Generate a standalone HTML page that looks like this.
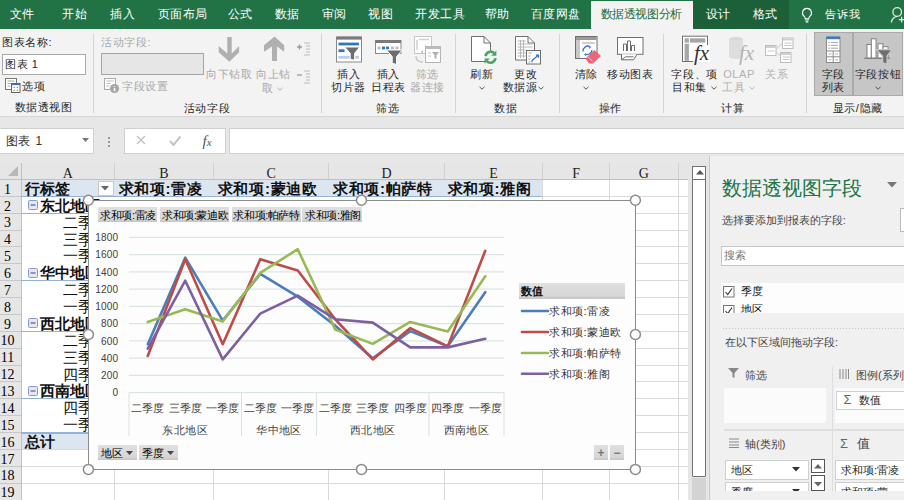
<!DOCTYPE html>
<html><head><meta charset="utf-8">
<style>
html,body{margin:0;padding:0;width:904px;height:500px;overflow:hidden;background:#e7e7e7;font-family:"Liberation Sans",sans-serif;}
.a{position:absolute;box-sizing:border-box;}
.t{position:absolute;white-space:nowrap;}
svg{position:absolute;overflow:visible;}
</style></head><body>

<div class="a" style="left:0px;top:0px;width:904px;height:29px;background:#217346;"></div>
<div class="a" style="left:591px;top:1px;width:102px;height:28px;background:#f3f3f3;"></div>
<div class="a" style="left:693px;top:0px;width:96px;height:29px;background:#1c603a;"></div>
<div class="t" style="left:824.5px;top:6.40px;font-size:11px;line-height:17px;color:#ffffff;font-weight:normal;letter-spacing:1.0px;">告诉我</div>
<div class="t" style="left:9.5px;top:5.20px;font-size:12px;line-height:19px;color:#ffffff;font-weight:normal;letter-spacing:0.6px;">文件</div>
<div class="t" style="left:62.1px;top:5.20px;font-size:12px;line-height:19px;color:#ffffff;font-weight:normal;letter-spacing:0.6px;">开始</div>
<div class="t" style="left:110.1px;top:5.20px;font-size:12px;line-height:19px;color:#ffffff;font-weight:normal;letter-spacing:0.6px;">插入</div>
<div class="t" style="left:157.5px;top:5.20px;font-size:12px;line-height:19px;color:#ffffff;font-weight:normal;letter-spacing:0.6px;">页面布局</div>
<div class="t" style="left:227.9px;top:5.20px;font-size:12px;line-height:19px;color:#ffffff;font-weight:normal;letter-spacing:0.6px;">公式</div>
<div class="t" style="left:274.9px;top:5.20px;font-size:12px;line-height:19px;color:#ffffff;font-weight:normal;letter-spacing:0.6px;">数据</div>
<div class="t" style="left:321.9px;top:5.20px;font-size:12px;line-height:19px;color:#ffffff;font-weight:normal;letter-spacing:0.6px;">审阅</div>
<div class="t" style="left:368.2px;top:5.20px;font-size:12px;line-height:19px;color:#ffffff;font-weight:normal;letter-spacing:0.6px;">视图</div>
<div class="t" style="left:415.2px;top:5.20px;font-size:12px;line-height:19px;color:#ffffff;font-weight:normal;letter-spacing:0.6px;">开发工具</div>
<div class="t" style="left:484.5px;top:5.20px;font-size:12px;line-height:19px;color:#ffffff;font-weight:normal;letter-spacing:0.6px;">帮助</div>
<div class="t" style="left:530.5px;top:5.20px;font-size:12px;line-height:19px;color:#ffffff;font-weight:normal;letter-spacing:0.6px;">百度网盘</div>
<div class="t" style="left:705.5px;top:5.20px;font-size:12px;line-height:19px;color:#ffffff;font-weight:normal;letter-spacing:0.6px;">设计</div>
<div class="t" style="left:752.5px;top:5.20px;font-size:12px;line-height:19px;color:#ffffff;font-weight:normal;letter-spacing:0.6px;">格式</div>
<div class="t" style="left:600.5px;top:5.40px;font-size:12px;line-height:19px;color:#1b6b3e;font-weight:normal;letter-spacing:-0.4px;">数据透视图分析</div>
<svg style="left:800px;top:6px" width="14" height="20" viewBox="0 0 14 20"><g transform="translate(7 10) scale(0.9) translate(-7 -10)"><path d="M7 1.5a5 5 0 0 0-3 9c.8.7 1 1.5 1 2.5h4c0-1 .2-1.8 1-2.5a5 5 0 0 0-3-9z" fill="none" stroke="#fff" stroke-width="1.2"/><path d="M5 14.5h4M5.5 16.5h3" stroke="#fff" stroke-width="1.2"/></g></svg>
<svg style="left:0;top:0" width="904" height="30" viewBox="0 0 904 30"><circle cx="897.2" cy="12" r="4.3" fill="none" stroke="#e8e8e8" stroke-width="1.3"/><path d="M891.3 22.5c0.5-3 2.8-5.8 6-6.2" fill="none" stroke="#e8e8e8" stroke-width="1.3"/><path d="M898.8 19.6h6M901.6 16.8v5.8" stroke="#e8e8e8" stroke-width="1.2"/></svg>
<div class="a" style="left:0px;top:29px;width:904px;height:88px;background:#f3f3f3;border-bottom:1px solid #d6d6d6;"></div>
<div class="a" style="left:93px;top:34px;width:1px;height:79px;background:#d4d4d4;"></div>
<div class="a" style="left:321px;top:34px;width:1px;height:79px;background:#d4d4d4;"></div>
<div class="a" style="left:455px;top:34px;width:1px;height:79px;background:#d4d4d4;"></div>
<div class="a" style="left:558.8px;top:34px;width:1px;height:79px;background:#d4d4d4;"></div>
<div class="a" style="left:662.8px;top:34px;width:1px;height:79px;background:#d4d4d4;"></div>
<div class="a" style="left:806px;top:34px;width:1px;height:79px;background:#d4d4d4;"></div>
<div class="t" style="left:2px;top:33.80px;font-size:11.01px;line-height:17px;color:#262626;font-weight:normal;letter-spacing:0.6px;">图表名称:</div>
<div class="a" style="left:2px;top:53.6px;width:84px;height:21px;background:#fff;border:1px solid #a8a8a8;"></div>
<div class="t" style="left:5px;top:56.00px;font-size:11.01px;line-height:17px;color:#262626;font-weight:normal;letter-spacing:0.6px;">图表 1</div>
<svg style="left:0;top:0" width="100" height="100" viewBox="0 0 100 100"><rect x="5.5" y="78.5" width="11" height="11" fill="#fff" stroke="#777"/><path d="M7.5 81h7M7.5 83.5h7M7.5 86h3" stroke="#aaa" stroke-width="1"/><rect x="11.5" y="83.5" width="8.5" height="9" fill="#fff" stroke="#666"/><rect x="11.5" y="83.5" width="8.5" height="1.6" fill="#3a6fc4"/><path d="M13.5 87.5h1.2M16.8 87.5h1.2M13.5 90.3h1.2M16.8 90.3h1.2" stroke="#777" stroke-width="1"/></svg>
<div class="t" style="left:22px;top:77.50px;font-size:11.01px;line-height:17px;color:#262626;font-weight:normal;letter-spacing:0.6px;">选项</div>
<div class="t" style="left:-6.5px;width:100px;text-align:center;top:99.00px;font-size:11.01px;line-height:17px;color:#262626;font-weight:normal;letter-spacing:0.6px;">数据透视图</div>
<div class="t" style="left:101px;top:34.30px;font-size:11.01px;line-height:17px;color:#a8a8a8;font-weight:normal;letter-spacing:0.6px;">活动字段:</div>
<div class="a" style="left:101px;top:53px;width:103px;height:21.6px;background:#e6e6e6;border:1px solid #a6a6a6;"></div>
<svg style="left:0;top:0" width="130" height="100" viewBox="0 0 130 100"><rect x="104.5" y="78.5" width="11" height="11" fill="#fff" stroke="#aaa"/><path d="M106.5 81h7M106.5 83.5h4M106.5 86h3" stroke="#bbb" stroke-width="1"/><circle cx="114.5" cy="88.5" r="4.6" fill="#a6a6a6"/><path d="M114.5 86.2v0.9M114.5 88v3.3" stroke="#fff" stroke-width="1.5"/></svg>
<div class="t" style="left:122px;top:78.00px;font-size:11.01px;line-height:17px;color:#a8a8a8;font-weight:normal;letter-spacing:0.6px;">字段设置</div>
<div class="t" style="left:157.0px;width:100px;text-align:center;top:99.80px;font-size:11.01px;line-height:17px;color:#262626;font-weight:normal;letter-spacing:0.6px;">活动字段</div>
<svg style="left:0;top:0" width="904" height="120" viewBox="0 0 904 120"><path d="M227.3 37h4.4v16.5l7.4-7.5v6.2l-9.7 9.5-10.7-9.5v-6.2l8.6 7.5z" fill="#b0b0b0"/><path d="M272 61h5v-14.5l7.2 5.3v-6.5l-9.7-8.8-10.5 8.8v6.5l8-5.3z" fill="#b0b0b0"/></svg>
<div class="t" style="left:199.4px;width:60px;text-align:center;top:66.10px;font-size:11.01px;line-height:17px;color:#a8a8a8;font-weight:normal;letter-spacing:0.6px;">向下钻取</div>
<div class="t" style="left:243.7px;width:60px;text-align:center;top:66.10px;font-size:11.01px;line-height:17px;color:#a8a8a8;font-weight:normal;letter-spacing:0.6px;">向上钻</div>
<div class="t" style="left:238.0px;width:60px;text-align:center;top:80.00px;font-size:11.01px;line-height:17px;color:#a8a8a8;font-weight:normal;letter-spacing:0.6px;">取</div>
<svg style="left:277px;top:86.5px" width="6" height="4" viewBox="0 0 6 4"><path d="M0.5 0.8L3 3.2L5.5 0.8" fill="none" stroke="#b0b0b0" stroke-width="1"/></svg>
<svg style="left:296px;top:42px" width="16" height="14" viewBox="0 0 16 14"><path d="M1 5h5M3.5 2.5v5" stroke="#999" stroke-width="1.3"/><path d="M8 1h6M10 4h4M10 7h4M10 10h4M8 13h6" stroke="#bbb" stroke-width="1.2"/></svg>
<svg style="left:296px;top:70px" width="16" height="14" viewBox="0 0 16 14"><path d="M1 5h5" stroke="#999" stroke-width="1.3"/><path d="M8 1h6M10 4h4M10 7h4M10 10h4M8 13h6" stroke="#bbb" stroke-width="1.2"/></svg>
<svg style="left:0;top:0" width="904" height="120" viewBox="0 0 904 120"><rect x="336.5" y="37" width="25" height="25" fill="#fff" stroke="#8a8a8a"/><rect x="336.5" y="36.6" width="25" height="3" fill="#7a7a7a"/><rect x="338.5" y="42.6" width="20.5" height="2.8" fill="#2e75c8"/><rect x="338.5" y="49.3" width="6" height="2.8" fill="#2e75c8"/><rect x="338.5" y="55.9" width="20.5" height="2.8" fill="#b7cde8"/><path d="M344.6 47h15.3l-5.3 6.3v7l-4.4-1.2v-5.8z" fill="#6d6d6d" stroke="#fff" stroke-width="1"/></svg>
<div class="t" style="left:318.7px;width:60px;text-align:center;top:66.00px;font-size:11.01px;line-height:17px;color:#262626;font-weight:normal;letter-spacing:0.6px;">插入</div>
<div class="t" style="left:318.7px;width:60px;text-align:center;top:79.40px;font-size:11.01px;line-height:17px;color:#262626;font-weight:normal;letter-spacing:0.6px;">切片器</div>
<svg style="left:0;top:0" width="904" height="120" viewBox="0 0 904 120"><rect x="375.5" y="40.5" width="25.5" height="13" fill="#fff" stroke="#8a8a8a"/><rect x="375.5" y="40" width="25.5" height="3" fill="#7a7a7a"/><rect x="377.5" y="46.6" width="3" height="2.8" fill="#bbb"/><rect x="382" y="46.6" width="3" height="2.8" fill="#2e75c8"/><rect x="386" y="46.6" width="3" height="2.8" fill="#2e75c8"/><rect x="391" y="46.6" width="3" height="2.8" fill="#bbb"/><rect x="395.5" y="46.6" width="3" height="2.8" fill="#bbb"/><path d="M386.4 50h16l-5.8 6.5v8l-4.4-1.2v-6.8z" fill="#6d6d6d" stroke="#fff" stroke-width="1"/></svg>
<div class="t" style="left:358.5px;width:60px;text-align:center;top:66.00px;font-size:11.01px;line-height:17px;color:#262626;font-weight:normal;letter-spacing:0.6px;">插入</div>
<div class="t" style="left:358.5px;width:60px;text-align:center;top:79.40px;font-size:11.01px;line-height:17px;color:#262626;font-weight:normal;letter-spacing:0.6px;">日程表</div>
<svg style="left:0;top:0" width="904" height="120" viewBox="0 0 904 120"><rect x="414.5" y="36.5" width="17" height="17" fill="#fff" stroke="#c8c8c8"/><path d="M417 40v10M419 39.5h10" stroke="#d0d0d0" stroke-width="1.5"/><path d="M427 47l-2 -2v4zM421 52l2 -2v4z" fill="#bbb"/><rect x="425.5" y="46.5" width="15" height="16" fill="#fff" stroke="#b4b4b4"/><rect x="425.5" y="46.5" width="15" height="2.5" fill="#bbb"/><path d="M428 53h3M428 56h3" stroke="#c8c8c8"/><path d="M432 52h7l-2.5 3v4l-2-1v-3z" fill="#b0b0b0"/><path d="M416 56c0 4 3 6 7 6" fill="none" stroke="#c8c8c8" stroke-width="1.5"/></svg>
<div class="t" style="left:397.5px;width:60px;text-align:center;top:66.00px;font-size:11.01px;line-height:17px;color:#a8a8a8;font-weight:normal;letter-spacing:0.6px;">筛选</div>
<div class="t" style="left:397.5px;width:60px;text-align:center;top:79.40px;font-size:11.01px;line-height:17px;color:#a8a8a8;font-weight:normal;letter-spacing:0.6px;">器连接</div>
<div class="t" style="left:357.7px;width:60px;text-align:center;top:99.80px;font-size:11.01px;line-height:17px;color:#262626;font-weight:normal;letter-spacing:0.6px;">筛选</div>
<svg style="left:0;top:0" width="904" height="120" viewBox="0 0 904 120"><path d="M471.5 36.5h12.5l6.5 6.5v18.5h-19z" fill="#fff" stroke="#6e6e6e"/><path d="M484 36.5v6.5h6.5" fill="none" stroke="#6e6e6e"/><circle cx="490.5" cy="57.2" r="6.8" fill="#f3f3f3"/><path d="M485.6 56.2a5 5 0 0 1 8.6-3" fill="none" stroke="#4aa564" stroke-width="2.6"/><path d="M495.4 58.2a5 5 0 0 1-8.6 3" fill="none" stroke="#4aa564" stroke-width="2.6"/><path d="M496.4 50.6v5.2h-5.2z" fill="#4aa564"/><path d="M484.6 63.8v-5.2h5.2z" fill="#4aa564"/></svg>
<div class="t" style="left:452.0px;width:60px;text-align:center;top:66.00px;font-size:11.01px;line-height:17px;color:#262626;font-weight:normal;letter-spacing:0.6px;">刷新</div>
<svg style="left:479px;top:86px" width="6" height="4" viewBox="0 0 6 4"><path d="M0.5 0.8L3 3.2L5.5 0.8" fill="none" stroke="#555" stroke-width="1"/></svg>
<svg style="left:0;top:0" width="904" height="120" viewBox="0 0 904 120"><path d="M515.5 36.5h12.5l6.5 6.5v17h-19z" fill="#fff" stroke="#6e6e6e"/><path d="M528 36.5v6.5h6.5" fill="none" stroke="#6e6e6e"/><path d="M517.5 41h8M517.5 44h15M517.5 47h15M517.5 50h9M517.5 53h9M517.5 56h9M520.5 40v18M523.5 40v18" stroke="#b0b0b0" stroke-width="0.9"/><rect x="526.5" y="50.5" width="14" height="13.5" fill="#fff" stroke="#6e6e6e"/><path d="M528.5 53h3M528.5 56h2M528.5 59h2M528.5 62h2" stroke="#999" stroke-width="0.9"/><path d="M532 60.5l6-5M536 55.2h2.5v2.5M532 60.5l0 1.8" fill="none" stroke="#2e75c8" stroke-width="1.2"/></svg>
<div class="t" style="left:495.70000000000005px;width:60px;text-align:center;top:66.00px;font-size:11.01px;line-height:17px;color:#262626;font-weight:normal;letter-spacing:0.6px;">更改</div>
<div class="t" style="left:485.0px;width:70px;text-align:center;top:79.40px;font-size:11.01px;line-height:17px;color:#262626;font-weight:normal;letter-spacing:0.6px;">数据源</div>
<svg style="left:538px;top:86px" width="6" height="4" viewBox="0 0 6 4"><path d="M0.5 0.8L3 3.2L5.5 0.8" fill="none" stroke="#555" stroke-width="1"/></svg>
<div class="t" style="left:475.8px;width:60px;text-align:center;top:99.80px;font-size:11.01px;line-height:17px;color:#262626;font-weight:normal;letter-spacing:0.6px;">数据</div>
<svg style="left:0;top:0" width="904" height="120" viewBox="0 0 904 120"><rect x="575.5" y="36.5" width="21.5" height="22" fill="#fff" stroke="#6e6e6e"/><rect x="576" y="37" width="20.5" height="3" fill="#9a9a9a"/><rect x="576" y="40" width="4" height="18" fill="#c8c8c8"/><rect x="582" y="42" width="13" height="2" fill="#d0d0d0"/><path d="M583 51.5a5 5 0 0 1 7-5" fill="none" stroke="#2e75c8" stroke-width="1.3"/><path d="M589 46l2.2 1-1.6 2z" fill="#2e75c8"/><path d="M592 50a5 5 0 0 1-6 4.5" fill="none" stroke="#2e75c8" stroke-width="1.3"/><path d="M586 56l-2-1.4 1.8-1.6z" fill="#2e75c8"/><path d="M585.5 58.5l9-8.5 6.5 6-8 7.5h-4z" fill="#e8677b"/><path d="M587.5 56.5l5 4.6" stroke="#f7c4cc" stroke-width="1"/></svg>
<div class="t" style="left:556.4px;width:60px;text-align:center;top:66.00px;font-size:11.01px;line-height:17px;color:#262626;font-weight:normal;letter-spacing:0.6px;">清除</div>
<svg style="left:583.4px;top:86px" width="6" height="4" viewBox="0 0 6 4"><path d="M0.5 0.8L3 3.2L5.5 0.8" fill="none" stroke="#555" stroke-width="1"/></svg>
<svg style="left:0;top:0" width="904" height="120" viewBox="0 0 904 120"><rect x="617.5" y="37.5" width="25.5" height="16.8" fill="#fff" stroke="#6e6e6e"/><path d="M623.5 51v-7h3v7M627.5 51v-10h3v10M631.5 51v-5.5h3v5.5" fill="none" stroke="#6e6e6e"/><path d="M621.5 54.3v5.5h12l3.5-5.5" fill="#fff" stroke="#6e6e6e"/><path d="M621.5 59.8l4-3h8" fill="none" stroke="#6e6e6e"/></svg>
<div class="t" style="left:600.2px;width:60px;text-align:center;top:66.00px;font-size:11.01px;line-height:17px;color:#262626;font-weight:normal;letter-spacing:0.6px;">移动图表</div>
<div class="t" style="left:580.5px;width:60px;text-align:center;top:99.80px;font-size:11.01px;line-height:17px;color:#262626;font-weight:normal;letter-spacing:0.6px;">操作</div>
<svg style="left:0;top:0" width="904" height="120" viewBox="0 0 904 120"><rect x="682.5" y="36.2" width="25" height="25.3" fill="#fff" stroke="#6e6e6e"/><rect x="690" y="38.3" width="15.3" height="4.3" fill="#a6a6a6"/><rect x="684.6" y="38.3" width="4.3" height="4.3" fill="#a6a6a6"/><rect x="684.6" y="43.8" width="4.3" height="17" fill="#a6a6a6"/><rect x="693" y="45" width="17" height="17" fill="#fff"/><text x="694" y="60.2" font-family="Liberation Serif,serif" font-style="italic" font-size="21" fill="#333">fx</text></svg>
<div class="t" style="left:664.7px;width:60px;text-align:center;top:66.00px;font-size:11.01px;line-height:17px;color:#262626;font-weight:normal;letter-spacing:0.6px;">字段、项</div>
<div class="t" style="left:659.5px;width:60px;text-align:center;top:79.40px;font-size:11.01px;line-height:17px;color:#262626;font-weight:normal;letter-spacing:0.6px;">目和集</div>
<svg style="left:711px;top:86px" width="6" height="4" viewBox="0 0 6 4"><path d="M0.5 0.8L3 3.2L5.5 0.8" fill="none" stroke="#555" stroke-width="1"/></svg>
<svg style="left:0;top:0" width="904" height="120" viewBox="0 0 904 120"><ellipse cx="736" cy="39.5" rx="7" ry="2.5" fill="#d8d8d8"/><rect x="729" y="39.5" width="14" height="17" fill="#dedede"/><ellipse cx="736" cy="56.5" rx="7" ry="2.5" fill="#dedede"/><text x="739" y="60.2" font-family="Liberation Serif,serif" font-style="italic" font-size="21" fill="#b4b4b4">fx</text></svg>
<div class="t" style="left:709.0px;width:60px;text-align:center;top:66.00px;font-size:11.01px;line-height:17px;color:#b0b0b0;font-weight:normal;letter-spacing:0.6px;">OLAP</div>
<div class="t" style="left:704.0px;width:60px;text-align:center;top:79.40px;font-size:11.01px;line-height:17px;color:#b0b0b0;font-weight:normal;letter-spacing:0.6px;">工具</div>
<svg style="left:749px;top:86px" width="6" height="4" viewBox="0 0 6 4"><path d="M0.5 0.8L3 3.2L5.5 0.8" fill="none" stroke="#b8b8b8" stroke-width="1"/></svg>
<svg style="left:0;top:0" width="904" height="120" viewBox="0 0 904 120"><rect x="765.5" y="45.5" width="10.5" height="10" fill="#fff" stroke="#bdbdbd"/><rect x="766" y="46" width="9.5" height="2" fill="#cfcfcf"/><rect x="782.5" y="38" width="10.5" height="10.5" fill="#fff" stroke="#bdbdbd"/><rect x="783" y="38.5" width="9.5" height="2" fill="#cfcfcf"/><rect x="780.5" y="52.5" width="10.5" height="10" fill="#fff" stroke="#bdbdbd"/><rect x="781" y="53" width="9.5" height="2" fill="#cfcfcf"/><path d="M776 49l6.5-5.5M776 52l4.5 4M767.5 51h7M784.5 43h7M784.5 45.5h7M782.5 57h7M782.5 59.5h7" stroke="#c8c8c8"/></svg>
<div class="t" style="left:747.0px;width:60px;text-align:center;top:66.00px;font-size:11.01px;line-height:17px;color:#b0b0b0;font-weight:normal;letter-spacing:0.6px;">关系</div>
<div class="t" style="left:703.0px;width:60px;text-align:center;top:99.80px;font-size:11.01px;line-height:17px;color:#262626;font-weight:normal;letter-spacing:0.6px;">计算</div>
<div class="a" style="left:814px;top:32.4px;width:39px;height:63.6px;background:#c6c6c6;border:1px solid #aaaaaa;"></div>
<div class="a" style="left:853px;top:32.4px;width:50px;height:63.6px;background:#c6c6c6;border:1px solid #aaaaaa;"></div>
<svg style="left:0;top:0" width="904" height="120" viewBox="0 0 904 120"><rect x="826.5" y="37" width="13.5" height="25.5" fill="#fff" stroke="#8a8a8a"/><rect x="826.5" y="36.6" width="13.5" height="2.6" fill="#3a78c9"/><path d="M828.5 42.4h1M828.5 45.3h1M828.5 48.2h1" stroke="#666" stroke-width="1"/><path d="M831 42.4h7M831 45.3h7M831 48.2h7" stroke="#9a9a9a" stroke-width="0.9"/><path d="M826.5 51h13.5M826.5 56.8h13.5M833.2 51v11.5" stroke="#8a8a8a" stroke-width="1"/><path d="M828.5 54h3M835 54h3M828.5 59.8h3M835 59.8h3" stroke="#aaa" stroke-width="0.9"/></svg>
<div class="t" style="left:803.5px;width:60px;text-align:center;top:66.00px;font-size:11.01px;line-height:17px;color:#262626;font-weight:normal;letter-spacing:0.6px;">字段</div>
<div class="t" style="left:803.5px;width:60px;text-align:center;top:79.40px;font-size:11.01px;line-height:17px;color:#262626;font-weight:normal;letter-spacing:0.6px;">列表</div>
<svg style="left:0;top:0" width="904" height="120" viewBox="0 0 904 120"><rect x="867" y="44.5" width="4.3" height="13.7" fill="#fff" stroke="#777" stroke-width="0.9"/><rect x="871.3" y="38.8" width="4.7" height="19.4" fill="#fff" stroke="#777" stroke-width="0.9"/><rect x="878" y="43.8" width="5" height="14.4" fill="#fff" stroke="#777" stroke-width="0.9"/><rect x="883" y="46.7" width="5" height="11.5" fill="#fff" stroke="#777" stroke-width="0.9"/><path d="M864 58.2h26" stroke="#777" stroke-width="1"/><path d="M876.2 49.6h15.8l-5 6.4v8.2l-4.4-1.6v-6.6z" fill="#6e6e6e" stroke="#c6c6c6" stroke-width="1.2"/></svg>
<div class="t" style="left:848.0px;width:60px;text-align:center;top:66.00px;font-size:11.01px;line-height:17px;color:#262626;font-weight:normal;letter-spacing:0.6px;">字段按钮</div>
<svg style="left:875px;top:86px" width="6" height="4" viewBox="0 0 6 4"><path d="M0.5 0.8L3 3.2L5.5 0.8" fill="none" stroke="#555" stroke-width="1"/></svg>
<div class="t" style="left:817.7px;width:80px;text-align:center;top:99.50px;font-size:11.01px;line-height:17px;color:#262626;font-weight:normal;letter-spacing:0.6px;">显示/隐藏</div>
<div class="a" style="left:0px;top:117px;width:904px;height:48px;background:#e7e7e7;"></div>
<div class="a" style="left:-1px;top:127.8px;width:95.3px;height:25.9px;background:#fff;border:1px solid #d0d0d0;"></div>
<div class="t" style="left:5.5px;top:131.50px;font-size:12px;line-height:19px;color:#333;font-weight:normal;letter-spacing:0.9px;">图表 1</div>
<svg style="left:81.5px;top:138px" width="7" height="4" viewBox="0 0 7 4"><path d="M0 0h7L3.5 4z" fill="#777"/></svg>
<div class="a" style="left:108px;top:137px;width:1.5px;height:1.5px;background:#999;"></div>
<div class="a" style="left:108px;top:141px;width:1.5px;height:1.5px;background:#999;"></div>
<div class="a" style="left:108px;top:145px;width:1.5px;height:1.5px;background:#999;"></div>
<div class="a" style="left:123.5px;top:127.8px;width:102px;height:25.9px;background:#fff;border:1px solid #d0d0d0;"></div>
<svg style="left:136px;top:135px" width="10" height="10" viewBox="0 0 10 10"><path d="M1 1l8 8M9 1l-8 8" stroke="#bdbdbd" stroke-width="1.2"/></svg>
<svg style="left:168.5px;top:136px" width="12" height="10" viewBox="0 0 12 10"><path d="M1 5l3.5 4L11.5 0.5" fill="none" stroke="#c4c4c4" stroke-width="2"/></svg>
<div class="t" style="left:202.5px;top:128.50px;font-size:15px;line-height:24px;color:#555;font-weight:normal;font-family:'Liberation Serif',serif;"><i>f</i><span style="font-size:11px"><i>x</i></span></div>
<div class="a" style="left:229.2px;top:127.8px;width:690px;height:25.9px;background:#fff;border:1px solid #d0d0d0;"></div>
<div class="a" style="left:21.1px;top:179.5px;width:667.1px;height:320.5px;background:#ffffff;"></div>
<div class="a" style="left:0px;top:163.3px;width:688.2px;height:16.19999999999999px;background:#e6e6e6;"></div>
<div class="a" style="left:0px;top:179.5px;width:21.1px;height:320.5px;background:#e6e6e6;"></div>
<svg style="left:7px;top:165px" width="12" height="12" viewBox="0 0 12 12"><path d="M11 1v10H1z" fill="#b8b8b8"/></svg>
<div class="a" style="left:21.1px;top:179.5px;width:521.4px;height:16.87px;background:#dce6f1;"></div>
<div class="a" style="left:21.1px;top:432.55px;width:93.4px;height:16.87px;background:#dce6f1;"></div>
<div class="a" style="left:21.1px;top:179.0px;width:667.1px;height:1px;background:#dadada;"></div>
<div class="a" style="left:0px;top:179.0px;width:21.1px;height:1px;background:#c8c8c8;"></div>
<div class="a" style="left:542.5px;top:195.87px;width:145.70000000000005px;height:1px;background:#dadada;"></div>
<div class="a" style="left:0px;top:195.87px;width:21.1px;height:1px;background:#c8c8c8;"></div>
<div class="a" style="left:542.5px;top:212.74px;width:145.70000000000005px;height:1px;background:#dadada;"></div>
<div class="a" style="left:0px;top:212.74px;width:21.1px;height:1px;background:#c8c8c8;"></div>
<div class="a" style="left:542.5px;top:229.61px;width:145.70000000000005px;height:1px;background:#dadada;"></div>
<div class="a" style="left:0px;top:229.61px;width:21.1px;height:1px;background:#c8c8c8;"></div>
<div class="a" style="left:542.5px;top:246.48000000000002px;width:145.70000000000005px;height:1px;background:#dadada;"></div>
<div class="a" style="left:0px;top:246.48000000000002px;width:21.1px;height:1px;background:#c8c8c8;"></div>
<div class="a" style="left:542.5px;top:263.35px;width:145.70000000000005px;height:1px;background:#dadada;"></div>
<div class="a" style="left:0px;top:263.35px;width:21.1px;height:1px;background:#c8c8c8;"></div>
<div class="a" style="left:542.5px;top:280.22px;width:145.70000000000005px;height:1px;background:#dadada;"></div>
<div class="a" style="left:0px;top:280.22px;width:21.1px;height:1px;background:#c8c8c8;"></div>
<div class="a" style="left:542.5px;top:297.09000000000003px;width:145.70000000000005px;height:1px;background:#dadada;"></div>
<div class="a" style="left:0px;top:297.09000000000003px;width:21.1px;height:1px;background:#c8c8c8;"></div>
<div class="a" style="left:542.5px;top:313.96000000000004px;width:145.70000000000005px;height:1px;background:#dadada;"></div>
<div class="a" style="left:0px;top:313.96000000000004px;width:21.1px;height:1px;background:#c8c8c8;"></div>
<div class="a" style="left:542.5px;top:330.83000000000004px;width:145.70000000000005px;height:1px;background:#dadada;"></div>
<div class="a" style="left:0px;top:330.83000000000004px;width:21.1px;height:1px;background:#c8c8c8;"></div>
<div class="a" style="left:542.5px;top:347.70000000000005px;width:145.70000000000005px;height:1px;background:#dadada;"></div>
<div class="a" style="left:0px;top:347.70000000000005px;width:21.1px;height:1px;background:#c8c8c8;"></div>
<div class="a" style="left:542.5px;top:364.57000000000005px;width:145.70000000000005px;height:1px;background:#dadada;"></div>
<div class="a" style="left:0px;top:364.57000000000005px;width:21.1px;height:1px;background:#c8c8c8;"></div>
<div class="a" style="left:542.5px;top:381.44px;width:145.70000000000005px;height:1px;background:#dadada;"></div>
<div class="a" style="left:0px;top:381.44px;width:21.1px;height:1px;background:#c8c8c8;"></div>
<div class="a" style="left:542.5px;top:398.31px;width:145.70000000000005px;height:1px;background:#dadada;"></div>
<div class="a" style="left:0px;top:398.31px;width:21.1px;height:1px;background:#c8c8c8;"></div>
<div class="a" style="left:542.5px;top:415.18px;width:145.70000000000005px;height:1px;background:#dadada;"></div>
<div class="a" style="left:0px;top:415.18px;width:21.1px;height:1px;background:#c8c8c8;"></div>
<div class="a" style="left:542.5px;top:432.05px;width:145.70000000000005px;height:1px;background:#dadada;"></div>
<div class="a" style="left:0px;top:432.05px;width:21.1px;height:1px;background:#c8c8c8;"></div>
<div class="a" style="left:21.1px;top:448.92px;width:667.1px;height:1px;background:#dadada;"></div>
<div class="a" style="left:0px;top:448.92px;width:21.1px;height:1px;background:#c8c8c8;"></div>
<div class="a" style="left:21.1px;top:465.79px;width:667.1px;height:1px;background:#dadada;"></div>
<div class="a" style="left:0px;top:465.79px;width:21.1px;height:1px;background:#c8c8c8;"></div>
<div class="a" style="left:21.1px;top:482.66px;width:667.1px;height:1px;background:#dadada;"></div>
<div class="a" style="left:0px;top:482.66px;width:21.1px;height:1px;background:#c8c8c8;"></div>
<div class="a" style="left:21.1px;top:499.53000000000003px;width:667.1px;height:1px;background:#dadada;"></div>
<div class="a" style="left:0px;top:499.53000000000003px;width:21.1px;height:1px;background:#c8c8c8;"></div>
<div class="a" style="left:114.0px;top:163.3px;width:1px;height:16.19999999999999px;background:#d0d0d0;"></div>
<div class="a" style="left:114.0px;top:449.42px;width:1px;height:50.579999999999984px;background:#dadada;"></div>
<div class="a" style="left:213.0px;top:163.3px;width:1px;height:16.19999999999999px;background:#d0d0d0;"></div>
<div class="a" style="left:213.0px;top:449.42px;width:1px;height:50.579999999999984px;background:#dadada;"></div>
<div class="a" style="left:328.1px;top:163.3px;width:1px;height:16.19999999999999px;background:#d0d0d0;"></div>
<div class="a" style="left:328.1px;top:449.42px;width:1px;height:50.579999999999984px;background:#dadada;"></div>
<div class="a" style="left:444.0px;top:163.3px;width:1px;height:16.19999999999999px;background:#d0d0d0;"></div>
<div class="a" style="left:444.0px;top:449.42px;width:1px;height:50.579999999999984px;background:#dadada;"></div>
<div class="a" style="left:542.0px;top:163.3px;width:1px;height:16.19999999999999px;background:#d0d0d0;"></div>
<div class="a" style="left:542.0px;top:179.5px;width:1px;height:320.5px;background:#dadada;"></div>
<div class="a" style="left:609.1px;top:163.3px;width:1px;height:16.19999999999999px;background:#d0d0d0;"></div>
<div class="a" style="left:609.1px;top:179.5px;width:1px;height:320.5px;background:#dadada;"></div>
<div class="a" style="left:677.5px;top:163.3px;width:1px;height:16.19999999999999px;background:#d0d0d0;"></div>
<div class="a" style="left:677.5px;top:179.5px;width:1px;height:320.5px;background:#dadada;"></div>
<div class="a" style="left:20.6px;top:163.3px;width:1px;height:336.7px;background:#c0c0c0;"></div>
<div class="a" style="left:0px;top:179.0px;width:688.2px;height:1px;background:#c0c0c0;"></div>
<div class="a" style="left:21.1px;top:212.74px;width:93.4px;height:1px;background:#95b3d7;"></div>
<div class="a" style="left:21.1px;top:280.22px;width:93.4px;height:1px;background:#95b3d7;"></div>
<div class="a" style="left:21.1px;top:330.83000000000004px;width:93.4px;height:1px;background:#95b3d7;"></div>
<div class="a" style="left:21.1px;top:398.31px;width:93.4px;height:1px;background:#95b3d7;"></div>
<div class="a" style="left:21.1px;top:195.87px;width:521.4px;height:1px;background:#95b3d7;"></div>
<div class="a" style="left:21.1px;top:432.05px;width:93.4px;height:2px;background:#95b3d7;"></div>
<div class="t" style="left:47.8px;width:40px;text-align:center;top:162.50px;font-size:14px;line-height:22px;color:#222;font-weight:normal;font-family:'Liberation Serif',serif;">A</div>
<div class="t" style="left:144.0px;width:40px;text-align:center;top:162.50px;font-size:14px;line-height:22px;color:#222;font-weight:normal;font-family:'Liberation Serif',serif;">B</div>
<div class="t" style="left:251.05px;width:40px;text-align:center;top:162.50px;font-size:14px;line-height:22px;color:#222;font-weight:normal;font-family:'Liberation Serif',serif;">C</div>
<div class="t" style="left:366.55px;width:40px;text-align:center;top:162.50px;font-size:14px;line-height:22px;color:#222;font-weight:normal;font-family:'Liberation Serif',serif;">D</div>
<div class="t" style="left:473.5px;width:40px;text-align:center;top:162.50px;font-size:14px;line-height:22px;color:#222;font-weight:normal;font-family:'Liberation Serif',serif;">E</div>
<div class="t" style="left:556.05px;width:40px;text-align:center;top:162.50px;font-size:14px;line-height:22px;color:#222;font-weight:normal;font-family:'Liberation Serif',serif;">F</div>
<div class="t" style="left:623.8px;width:40px;text-align:center;top:162.50px;font-size:14px;line-height:22px;color:#222;font-weight:normal;font-family:'Liberation Serif',serif;">G</div>
<div class="t" style="left:-7.5px;width:30px;text-align:center;top:178.63px;font-size:14px;line-height:22px;color:#000;font-weight:normal;font-family:'Liberation Serif',serif;">1</div>
<div class="t" style="left:-7.5px;width:30px;text-align:center;top:195.50px;font-size:14px;line-height:22px;color:#000;font-weight:normal;font-family:'Liberation Serif',serif;">2</div>
<div class="t" style="left:-7.5px;width:30px;text-align:center;top:212.38px;font-size:14px;line-height:22px;color:#000;font-weight:normal;font-family:'Liberation Serif',serif;">3</div>
<div class="t" style="left:-7.5px;width:30px;text-align:center;top:229.25px;font-size:14px;line-height:22px;color:#000;font-weight:normal;font-family:'Liberation Serif',serif;">4</div>
<div class="t" style="left:-7.5px;width:30px;text-align:center;top:246.12px;font-size:14px;line-height:22px;color:#000;font-weight:normal;font-family:'Liberation Serif',serif;">5</div>
<div class="t" style="left:-7.5px;width:30px;text-align:center;top:262.99px;font-size:14px;line-height:22px;color:#000;font-weight:normal;font-family:'Liberation Serif',serif;">6</div>
<div class="t" style="left:-7.5px;width:30px;text-align:center;top:279.85px;font-size:14px;line-height:22px;color:#000;font-weight:normal;font-family:'Liberation Serif',serif;">7</div>
<div class="t" style="left:-7.5px;width:30px;text-align:center;top:296.72px;font-size:14px;line-height:22px;color:#000;font-weight:normal;font-family:'Liberation Serif',serif;">8</div>
<div class="t" style="left:-7.5px;width:30px;text-align:center;top:313.59px;font-size:14px;line-height:22px;color:#000;font-weight:normal;font-family:'Liberation Serif',serif;">9</div>
<div class="t" style="left:-7.5px;width:30px;text-align:center;top:330.46px;font-size:14px;line-height:22px;color:#000;font-weight:normal;font-family:'Liberation Serif',serif;">10</div>
<div class="t" style="left:-7.5px;width:30px;text-align:center;top:347.33px;font-size:14px;line-height:22px;color:#000;font-weight:normal;font-family:'Liberation Serif',serif;">11</div>
<div class="t" style="left:-7.5px;width:30px;text-align:center;top:364.20px;font-size:14px;line-height:22px;color:#000;font-weight:normal;font-family:'Liberation Serif',serif;">12</div>
<div class="t" style="left:-7.5px;width:30px;text-align:center;top:381.07px;font-size:14px;line-height:22px;color:#000;font-weight:normal;font-family:'Liberation Serif',serif;">13</div>
<div class="t" style="left:-7.5px;width:30px;text-align:center;top:397.94px;font-size:14px;line-height:22px;color:#000;font-weight:normal;font-family:'Liberation Serif',serif;">14</div>
<div class="t" style="left:-7.5px;width:30px;text-align:center;top:414.81px;font-size:14px;line-height:22px;color:#000;font-weight:normal;font-family:'Liberation Serif',serif;">15</div>
<div class="t" style="left:-7.5px;width:30px;text-align:center;top:431.69px;font-size:14px;line-height:22px;color:#000;font-weight:normal;font-family:'Liberation Serif',serif;">16</div>
<div class="t" style="left:-7.5px;width:30px;text-align:center;top:448.56px;font-size:14px;line-height:22px;color:#000;font-weight:normal;font-family:'Liberation Serif',serif;">17</div>
<div class="t" style="left:-7.5px;width:30px;text-align:center;top:465.43px;font-size:14px;line-height:22px;color:#000;font-weight:normal;font-family:'Liberation Serif',serif;">18</div>
<div class="t" style="left:-7.5px;width:30px;text-align:center;top:482.30px;font-size:14px;line-height:22px;color:#000;font-weight:normal;font-family:'Liberation Serif',serif;">19</div>
<div class="t" style="left:25px;top:177.00px;font-size:15px;line-height:24px;color:#111;font-weight:bold;">行标签</div>
<div class="a" style="left:97.5px;top:181px;width:16px;height:15px;background:#fff;border:1px solid #c8c8c8;"></div>
<svg style="left:101px;top:186px" width="8" height="5" viewBox="0 0 8 5"><path d="M0 0h8L4 4.5z" fill="#666"/></svg>
<div class="t" style="left:118.5px;top:177.00px;font-size:15px;line-height:24px;color:#111;font-weight:bold;letter-spacing:0.7px;">求和项:雷凌</div>
<div class="t" style="left:217.8px;top:177.00px;font-size:15px;line-height:24px;color:#111;font-weight:bold;letter-spacing:0.7px;">求和项:蒙迪欧</div>
<div class="t" style="left:333px;top:177.00px;font-size:15px;line-height:24px;color:#111;font-weight:bold;letter-spacing:0.7px;">求和项:帕萨特</div>
<div class="t" style="left:447.5px;top:177.00px;font-size:15px;line-height:24px;color:#111;font-weight:bold;letter-spacing:0.7px;">求和项:雅阁</div>
<svg style="left:28px;top:200.31px" width="10" height="10" viewBox="0 0 10 10"><rect x="0.5" y="0.5" width="9" height="9" rx="1" fill="#e4e8f4" stroke="#8d9ac8"/><path d="M2.5 5h5" stroke="#5060a0" stroke-width="1.2"/></svg>
<div class="t" style="left:40px;top:193.81px;font-size:15px;line-height:24px;color:#111;font-weight:bold;">东北地区</div>
<div class="t" style="left:63px;top:210.68px;font-size:15px;line-height:24px;color:#111;font-weight:normal;">二季度</div>
<div class="t" style="left:63px;top:227.55px;font-size:15px;line-height:24px;color:#111;font-weight:normal;">三季度</div>
<div class="t" style="left:63px;top:244.42px;font-size:15px;line-height:24px;color:#111;font-weight:normal;">一季度</div>
<svg style="left:28px;top:267.79px" width="10" height="10" viewBox="0 0 10 10"><rect x="0.5" y="0.5" width="9" height="9" rx="1" fill="#e4e8f4" stroke="#8d9ac8"/><path d="M2.5 5h5" stroke="#5060a0" stroke-width="1.2"/></svg>
<div class="t" style="left:40px;top:261.29px;font-size:15px;line-height:24px;color:#111;font-weight:bold;">华中地区</div>
<div class="t" style="left:63px;top:278.15px;font-size:15px;line-height:24px;color:#111;font-weight:normal;">二季度</div>
<div class="t" style="left:63px;top:295.02px;font-size:15px;line-height:24px;color:#111;font-weight:normal;">一季度</div>
<svg style="left:28px;top:318.39px" width="10" height="10" viewBox="0 0 10 10"><rect x="0.5" y="0.5" width="9" height="9" rx="1" fill="#e4e8f4" stroke="#8d9ac8"/><path d="M2.5 5h5" stroke="#5060a0" stroke-width="1.2"/></svg>
<div class="t" style="left:40px;top:311.89px;font-size:15px;line-height:24px;color:#111;font-weight:bold;">西北地区</div>
<div class="t" style="left:63px;top:328.76px;font-size:15px;line-height:24px;color:#111;font-weight:normal;">二季度</div>
<div class="t" style="left:63px;top:345.63px;font-size:15px;line-height:24px;color:#111;font-weight:normal;">三季度</div>
<div class="t" style="left:63px;top:362.50px;font-size:15px;line-height:24px;color:#111;font-weight:normal;">四季度</div>
<svg style="left:28px;top:385.88px" width="10" height="10" viewBox="0 0 10 10"><rect x="0.5" y="0.5" width="9" height="9" rx="1" fill="#e4e8f4" stroke="#8d9ac8"/><path d="M2.5 5h5" stroke="#5060a0" stroke-width="1.2"/></svg>
<div class="t" style="left:40px;top:379.38px;font-size:15px;line-height:24px;color:#111;font-weight:bold;">西南地区</div>
<div class="t" style="left:63px;top:396.25px;font-size:15px;line-height:24px;color:#111;font-weight:normal;">四季度</div>
<div class="t" style="left:63px;top:413.12px;font-size:15px;line-height:24px;color:#111;font-weight:normal;">一季度</div>
<div class="t" style="left:25px;top:429.99px;font-size:15px;line-height:24px;color:#111;font-weight:bold;">总计</div>
<div class="a" style="left:688.2px;top:163.3px;width:22px;height:336.7px;background:#e6e6e6;"></div>
<div class="a" style="left:692.3px;top:165.5px;width:14px;height:311px;background:#fff;border:1.3px solid #707070;border-radius:1px;"></div>
<div class="a" style="left:692.3px;top:165.5px;width:14px;height:14px;background:#fff;border:1.3px solid #707070;"></div>
<svg style="left:695.5px;top:170px" width="8" height="5" viewBox="0 0 8 5"><path d="M0 4.5h8L4 0z" fill="#555"/></svg>
<div class="a" style="left:692.3px;top:478px;width:14px;height:22px;background:#d3d3d3;"></div>
<div class="a" style="left:708.5px;top:156px;width:1.2px;height:344px;background:#c8c8c8;"></div>
<div class="a" style="left:87.7px;top:199.6px;width:548.4px;height:270.5px;background:#fdfdfd;border:1.5px solid #8c8c8c;"></div>
<svg style="left:0;top:0" width="904" height="500" viewBox="0 0 904 500"><line x1="129" y1="375.34" x2="504" y2="375.34" stroke="#dbe5e1" stroke-width="1.2"/><line x1="129" y1="358.09" x2="504" y2="358.09" stroke="#dbe5e1" stroke-width="1.2"/><line x1="129" y1="340.83" x2="504" y2="340.83" stroke="#dbe5e1" stroke-width="1.2"/><line x1="129" y1="323.58" x2="504" y2="323.58" stroke="#dbe5e1" stroke-width="1.2"/><line x1="129" y1="306.32" x2="504" y2="306.32" stroke="#dbe5e1" stroke-width="1.2"/><line x1="129" y1="289.07" x2="504" y2="289.07" stroke="#dbe5e1" stroke-width="1.2"/><line x1="129" y1="271.81" x2="504" y2="271.81" stroke="#dbe5e1" stroke-width="1.2"/><line x1="129" y1="254.56" x2="504" y2="254.56" stroke="#dbe5e1" stroke-width="1.2"/><line x1="129" y1="237.30" x2="504" y2="237.30" stroke="#dbe5e1" stroke-width="1.2"/><line x1="129" y1="392.60" x2="504" y2="392.60" stroke="#d6e0dc" stroke-width="1"/><line x1="129" y1="392.60" x2="129" y2="436" stroke="#d9e3df" stroke-width="1"/><line x1="241.5" y1="392.60" x2="241.5" y2="436" stroke="#d9e3df" stroke-width="1"/><line x1="316.5" y1="392.60" x2="316.5" y2="436" stroke="#d9e3df" stroke-width="1"/><line x1="429" y1="392.60" x2="429" y2="436" stroke="#d9e3df" stroke-width="1"/><line x1="504" y1="392.60" x2="504" y2="436" stroke="#d9e3df" stroke-width="1"/><polyline points="147.75,344.20 185.25,257.66 222.75,320.56 260.25,273.88 297.75,296.66 335.25,325.73 372.75,358.26 410.25,331.08 447.75,346.36 485.25,292.17" fill="none" stroke="#4a7ebb" stroke-width="2.6" stroke-linejoin="round" stroke-linecap="round"/><polyline points="147.75,355.93 185.25,259.30 222.75,344.20 260.25,259.30 297.75,270.52 335.25,319.26 372.75,359.38 410.25,328.06 447.75,346.36 485.25,250.85" fill="none" stroke="#be4b48" stroke-width="2.6" stroke-linejoin="round" stroke-linecap="round"/><polyline points="147.75,322.02 185.25,309.17 222.75,321.42 260.25,272.93 297.75,249.21 335.25,329.62 372.75,343.85 410.25,321.94 447.75,331.52 485.25,276.30" fill="none" stroke="#98b954" stroke-width="2.6" stroke-linejoin="round" stroke-linecap="round"/><polyline points="147.75,348.60 185.25,280.70 222.75,359.38 260.25,313.57 297.75,295.62 335.25,319.18 372.75,322.63 410.25,347.39 447.75,347.39 485.25,338.85" fill="none" stroke="#7d60a0" stroke-width="2.6" stroke-linejoin="round" stroke-linecap="round"/><line x1="522" y1="311" x2="548" y2="311" stroke="#4a7ebb" stroke-width="2.6" stroke-linecap="round"/><line x1="522" y1="332" x2="548" y2="332" stroke="#be4b48" stroke-width="2.6" stroke-linecap="round"/><line x1="522" y1="353" x2="548" y2="353" stroke="#98b954" stroke-width="2.6" stroke-linecap="round"/><line x1="522" y1="373.8" x2="548" y2="373.8" stroke="#7d60a0" stroke-width="2.6" stroke-linecap="round"/><circle cx="88.4" cy="200.2" r="5" fill="#ffffff" stroke="#8c8c8c" stroke-width="1.5"/><circle cx="361.5" cy="200.2" r="5" fill="#ffffff" stroke="#8c8c8c" stroke-width="1.5"/><circle cx="635.4" cy="200.2" r="5" fill="#ffffff" stroke="#8c8c8c" stroke-width="1.5"/><circle cx="88.4" cy="334.5" r="5" fill="#ffffff" stroke="#8c8c8c" stroke-width="1.5"/><circle cx="635.4" cy="334.5" r="5" fill="#ffffff" stroke="#8c8c8c" stroke-width="1.5"/><circle cx="88.4" cy="469.4" r="5" fill="#ffffff" stroke="#8c8c8c" stroke-width="1.5"/><circle cx="361.5" cy="469.4" r="5" fill="#ffffff" stroke="#8c8c8c" stroke-width="1.5"/><circle cx="635.4" cy="469.4" r="5" fill="#ffffff" stroke="#8c8c8c" stroke-width="1.5"/></svg>
<div class="t" style="left:78.3px;width:40px;text-align:right;top:385.40px;font-size:10px;line-height:16px;color:#404040;font-weight:normal;letter-spacing:0.2px;">0</div>
<div class="t" style="left:78.3px;width:40px;text-align:right;top:368.14px;font-size:10px;line-height:16px;color:#404040;font-weight:normal;letter-spacing:0.2px;">200</div>
<div class="t" style="left:78.3px;width:40px;text-align:right;top:350.89px;font-size:10px;line-height:16px;color:#404040;font-weight:normal;letter-spacing:0.2px;">400</div>
<div class="t" style="left:78.3px;width:40px;text-align:right;top:333.63px;font-size:10px;line-height:16px;color:#404040;font-weight:normal;letter-spacing:0.2px;">600</div>
<div class="t" style="left:78.3px;width:40px;text-align:right;top:316.38px;font-size:10px;line-height:16px;color:#404040;font-weight:normal;letter-spacing:0.2px;">800</div>
<div class="t" style="left:78.3px;width:40px;text-align:right;top:299.12px;font-size:10px;line-height:16px;color:#404040;font-weight:normal;letter-spacing:0.2px;">1000</div>
<div class="t" style="left:78.3px;width:40px;text-align:right;top:281.87px;font-size:10px;line-height:16px;color:#404040;font-weight:normal;letter-spacing:0.2px;">1200</div>
<div class="t" style="left:78.3px;width:40px;text-align:right;top:264.61px;font-size:10px;line-height:16px;color:#404040;font-weight:normal;letter-spacing:0.2px;">1400</div>
<div class="t" style="left:78.3px;width:40px;text-align:right;top:247.36px;font-size:10px;line-height:16px;color:#404040;font-weight:normal;letter-spacing:0.2px;">1600</div>
<div class="t" style="left:78.3px;width:40px;text-align:right;top:230.10px;font-size:10px;line-height:16px;color:#404040;font-weight:normal;letter-spacing:0.2px;">1800</div>
<div class="t" style="left:127.75px;width:40px;text-align:center;top:399.60px;font-size:11px;line-height:17px;color:#404040;font-weight:normal;">二季度</div>
<div class="t" style="left:165.25px;width:40px;text-align:center;top:399.60px;font-size:11px;line-height:17px;color:#404040;font-weight:normal;">三季度</div>
<div class="t" style="left:202.75px;width:40px;text-align:center;top:399.60px;font-size:11px;line-height:17px;color:#404040;font-weight:normal;">一季度</div>
<div class="t" style="left:240.25px;width:40px;text-align:center;top:399.60px;font-size:11px;line-height:17px;color:#404040;font-weight:normal;">二季度</div>
<div class="t" style="left:277.75px;width:40px;text-align:center;top:399.60px;font-size:11px;line-height:17px;color:#404040;font-weight:normal;">一季度</div>
<div class="t" style="left:315.25px;width:40px;text-align:center;top:399.60px;font-size:11px;line-height:17px;color:#404040;font-weight:normal;">二季度</div>
<div class="t" style="left:352.75px;width:40px;text-align:center;top:399.60px;font-size:11px;line-height:17px;color:#404040;font-weight:normal;">三季度</div>
<div class="t" style="left:390.25px;width:40px;text-align:center;top:399.60px;font-size:11px;line-height:17px;color:#404040;font-weight:normal;">四季度</div>
<div class="t" style="left:427.75px;width:40px;text-align:center;top:399.60px;font-size:11px;line-height:17px;color:#404040;font-weight:normal;">四季度</div>
<div class="t" style="left:465.25px;width:40px;text-align:center;top:399.60px;font-size:11px;line-height:17px;color:#404040;font-weight:normal;">一季度</div>
<div class="t" style="left:155.25px;width:60px;text-align:center;top:421.50px;font-size:11px;line-height:17px;color:#404040;font-weight:normal;letter-spacing:0.4px;">东北地区</div>
<div class="t" style="left:249.0px;width:60px;text-align:center;top:421.50px;font-size:11px;line-height:17px;color:#404040;font-weight:normal;letter-spacing:0.4px;">华中地区</div>
<div class="t" style="left:342.75px;width:60px;text-align:center;top:421.50px;font-size:11px;line-height:17px;color:#404040;font-weight:normal;letter-spacing:0.4px;">西北地区</div>
<div class="t" style="left:436.5px;width:60px;text-align:center;top:421.50px;font-size:11px;line-height:17px;color:#404040;font-weight:normal;letter-spacing:0.4px;">西南地区</div>
<div class="a" style="left:97.7px;top:206.5px;width:59.8px;height:15px;background:linear-gradient(#e0e0e0,#d6d6d6 80%,#c4c4c4);"></div>
<div class="t" style="left:88.1px;width:80px;text-align:center;top:206.50px;font-size:11px;line-height:17px;color:#000;font-weight:normal;letter-spacing:-0.4px;">求和项:雷凌</div>
<div class="a" style="left:159.7px;top:206.5px;width:69.70000000000002px;height:15px;background:linear-gradient(#e0e0e0,#d6d6d6 80%,#c4c4c4);"></div>
<div class="t" style="left:155.05px;width:80px;text-align:center;top:206.50px;font-size:11px;line-height:17px;color:#000;font-weight:normal;letter-spacing:-0.4px;">求和项:蒙迪欧</div>
<div class="a" style="left:231.5px;top:206.5px;width:69.10000000000002px;height:15px;background:linear-gradient(#e0e0e0,#d6d6d6 80%,#c4c4c4);"></div>
<div class="t" style="left:226.55px;width:80px;text-align:center;top:206.50px;font-size:11px;line-height:17px;color:#000;font-weight:normal;letter-spacing:-0.4px;">求和项:帕萨特</div>
<div class="a" style="left:302.4px;top:206.5px;width:60.10000000000002px;height:15px;background:linear-gradient(#e0e0e0,#d6d6d6 80%,#c4c4c4);"></div>
<div class="t" style="left:292.95px;width:80px;text-align:center;top:206.50px;font-size:11px;line-height:17px;color:#000;font-weight:normal;letter-spacing:-0.4px;">求和项:雅阁</div>
<div class="a" style="left:97.7px;top:445px;width:39.8px;height:15px;background:linear-gradient(#e0e0e0,#d6d6d6 80%,#c4c4c4);"></div>
<div class="t" style="left:100.7px;top:444.50px;font-size:11px;line-height:17px;color:#000;font-weight:normal;">地区</div>
<svg style="left:125.5px;top:451px" width="7" height="4" viewBox="0 0 7 4"><path d="M0 0h7L3.5 4z" fill="#444"/></svg>
<div class="a" style="left:139.3px;top:445px;width:39.19999999999999px;height:15px;background:linear-gradient(#e0e0e0,#d6d6d6 80%,#c4c4c4);"></div>
<div class="t" style="left:142.3px;top:444.50px;font-size:11px;line-height:17px;color:#000;font-weight:normal;">季度</div>
<svg style="left:166.5px;top:451px" width="7" height="4" viewBox="0 0 7 4"><path d="M0 0h7L3.5 4z" fill="#444"/></svg>
<div class="a" style="left:518.7px;top:283.4px;width:106.5px;height:15.6px;background:linear-gradient(#e0e0e0,#d6d6d6 80%,#c4c4c4);"></div>
<div class="t" style="left:521px;top:283.20px;font-size:11px;line-height:17px;color:#111;font-weight:bold;">数值</div>
<div class="t" style="left:549px;top:303.00px;font-size:11px;line-height:17px;color:#333;font-weight:normal;letter-spacing:0.5px;">求和项:雷凌</div>
<div class="t" style="left:549px;top:324.00px;font-size:11px;line-height:17px;color:#333;font-weight:normal;letter-spacing:0.5px;">求和项:蒙迪欧</div>
<div class="t" style="left:549px;top:345.00px;font-size:11px;line-height:17px;color:#333;font-weight:normal;letter-spacing:0.5px;">求和项:帕萨特</div>
<div class="t" style="left:549px;top:365.80px;font-size:11px;line-height:17px;color:#333;font-weight:normal;letter-spacing:0.5px;">求和项:雅阁</div>
<div class="a" style="left:594px;top:445px;width:14px;height:15px;background:linear-gradient(#e0e0e0,#d6d6d6 80%,#c4c4c4);"></div>
<div class="t" style="left:594.0px;width:14px;text-align:center;top:443.50px;font-size:12px;line-height:19px;color:#777;font-weight:bold;">+</div>
<div class="a" style="left:610px;top:445px;width:14px;height:15px;background:linear-gradient(#e0e0e0,#d6d6d6 80%,#c4c4c4);"></div>
<div class="t" style="left:610.0px;width:14px;text-align:center;top:443.50px;font-size:12px;line-height:19px;color:#777;font-weight:bold;">−</div>
<div class="a" style="left:709.5px;top:156px;width:194.5px;height:344px;background:#f0f0f0;"></div>
<div class="t" style="left:721.8px;top:171.50px;font-size:20px;line-height:32px;color:#217346;font-weight:normal;">数据透视图字段</div>
<svg style="left:887px;top:182px" width="10" height="6" viewBox="0 0 10 6"><path d="M0 0h10L5 5.5z" fill="#777"/></svg>
<div class="t" style="left:721.8px;top:212.00px;font-size:11px;line-height:17px;color:#444;font-weight:normal;">选择要添加到报表的字段:</div>
<div class="a" style="left:899.5px;top:208px;width:10px;height:24px;background:#fff;border:1px solid #bbb;"></div>
<div class="a" style="left:721.3px;top:246px;width:190px;height:20px;background:#fff;border:1px solid #c6c6c6;"></div>
<div class="t" style="left:724px;top:246.50px;font-size:11px;line-height:17px;color:#777;font-weight:normal;">搜索</div>
<div class="a" style="left:721.3px;top:283.3px;width:190px;height:30px;background:#fdfdfd;"></div>
<svg style="left:723.4px;top:285.9px" width="12" height="12" viewBox="0 0 12 12"><rect x="0.5" y="0.5" width="10.5" height="10.5" fill="#fff" stroke="#777"/><path d="M2.5 6l2.2 2.5L9 2.5" fill="none" stroke="#333" stroke-width="1.1"/></svg>
<svg style="left:723.4px;top:304.5px" width="12" height="12" viewBox="0 0 12 12"><rect x="0.5" y="0.5" width="10.5" height="10.5" fill="#fff" stroke="#777"/><path d="M2.5 6l2.2 2.5L9 2.5" fill="none" stroke="#333" stroke-width="1.1"/></svg>
<div class="t" style="left:741px;top:282.80px;font-size:11px;line-height:17px;color:#111;font-weight:normal;">季度</div>
<div class="a" style="left:721.3px;top:283.3px;width:190px;height:30px;overflow:hidden"><div class="t" style="left:19.7px;top:16.8px;font-size:11px;line-height:19px;color:#111">地区</div></div>
<div class="a" style="left:721.3px;top:313.2px;width:190px;height:6px;background:#f0f0f0;"></div>
<div class="a" style="left:723px;top:328px;width:190px;height:1px;background:repeating-linear-gradient(90deg,#c4c4c4 0 1px,transparent 1px 3px);"></div>
<div class="t" style="left:725px;top:333.70px;font-size:11px;line-height:17px;color:#444;font-weight:normal;">在以下区域间拖动字段:</div>
<svg style="left:728px;top:368px" width="11" height="10" viewBox="0 0 11 10"><path d="M0 0h11L6.5 5v5L4.5 9V5z" fill="#888"/></svg>
<div class="t" style="left:745px;top:367.00px;font-size:11px;line-height:17px;color:#444;font-weight:normal;">筛选</div>
<svg style="left:839px;top:369px" width="10" height="10" viewBox="0 0 10 10"><path d="M1 0v10M4 0v10M7 0v10M9.5 0v10" stroke="#888" stroke-width="1"/></svg>
<div class="t" style="left:856px;top:366.50px;font-size:11px;line-height:17px;color:#444;font-weight:normal;">图例(系列)</div>
<div class="a" style="left:831.5px;top:366.5px;width:1.5px;height:134px;background:#dedede;"></div>
<div class="a" style="left:724px;top:387.5px;width:102px;height:35px;background:#fbfbfb;"></div>
<div class="a" style="left:835px;top:387.5px;width:80px;height:35px;background:#fbfbfb;"></div>
<div class="a" style="left:836px;top:390.5px;width:80px;height:19.5px;background:#fff;border:1px solid #cfcfcf;"></div>
<div class="t" style="left:843.5px;top:390.00px;font-size:13px;line-height:20px;color:#666;font-weight:normal;">Σ</div>
<div class="t" style="left:859px;top:392.00px;font-size:11px;line-height:17px;color:#262626;font-weight:normal;letter-spacing:0.3px;">数值</div>
<div class="a" style="left:724px;top:429px;width:190px;height:1.5px;background:#dedede;"></div>
<svg style="left:729px;top:438px" width="10" height="10" viewBox="0 0 10 10"><path d="M0 1h10M0 4h10M0 7h10M0 9.5h10" stroke="#888" stroke-width="1"/></svg>
<div class="t" style="left:745px;top:435.50px;font-size:11px;line-height:17px;color:#444;font-weight:normal;">轴(类别)</div>
<div class="t" style="left:840px;top:433.50px;font-size:13px;line-height:20px;color:#666;font-weight:normal;">Σ</div>
<div class="t" style="left:857px;top:434.00px;font-size:13px;line-height:20px;color:#444;font-weight:normal;">值</div>
<div class="a" style="left:724px;top:437px;width:1px;height:1px;"></div>
<div class="a" style="left:724.6px;top:459.5px;width:84px;height:20px;background:#fff;border:1px solid #cfcfcf;"></div>
<div class="t" style="left:731px;top:461.50px;font-size:11px;line-height:17px;color:#262626;font-weight:normal;">地区</div>
<svg style="left:792px;top:467px" width="8" height="5" viewBox="0 0 8 5"><path d="M0 0h8L4 4.5z" fill="#333"/></svg>
<div class="a" style="left:724.6px;top:482px;width:84px;height:20px;background:#fff;border:1px solid #cfcfcf;"></div>
<svg style="left:792px;top:488.5px" width="8" height="5" viewBox="0 0 8 5"><path d="M0 0h8L4 4.5z" fill="#333"/></svg>
<div class="a" style="left:724.6px;top:482px;width:84px;height:9px;overflow:hidden"><div class="t" style="left:6px;top:1px;font-size:11px;line-height:19px;color:#262626">季度</div></div>
<div class="a" style="left:811px;top:458.6px;width:14px;height:32px;background:#fff;border:1.2px solid #555;"></div>
<div class="a" style="left:811px;top:472.2px;width:14px;height:4px;background:#fff;border-top:1.2px solid #555;border-bottom:1.2px solid #555;"></div>
<svg style="left:814px;top:463.5px" width="8" height="5" viewBox="0 0 8 5"><path d="M0 4.5h8L4 0z" fill="#666"/></svg>
<svg style="left:814px;top:481.5px" width="8" height="5" viewBox="0 0 8 5"><path d="M0 0h8L4 4.5z" fill="#666"/></svg>
<div class="a" style="left:835px;top:459.5px;width:80px;height:20px;background:#fff;border:1px solid #cfcfcf;"></div>
<div class="t" style="left:841px;top:461.50px;font-size:11px;line-height:17px;color:#262626;font-weight:normal;">求和项:雷凌</div>
<div class="a" style="left:835px;top:482px;width:80px;height:20px;background:#fff;border:1px solid #cfcfcf;"></div>
<div class="a" style="left:835px;top:482px;width:80px;height:9px;overflow:hidden"><div class="t" style="left:6px;top:1px;font-size:11px;line-height:19px;color:#262626">求和项:蒙</div></div>
<div class="a" style="left:709.5px;top:491px;width:200px;height:9px;background:#f0f0f0;"></div>
</body></html>
